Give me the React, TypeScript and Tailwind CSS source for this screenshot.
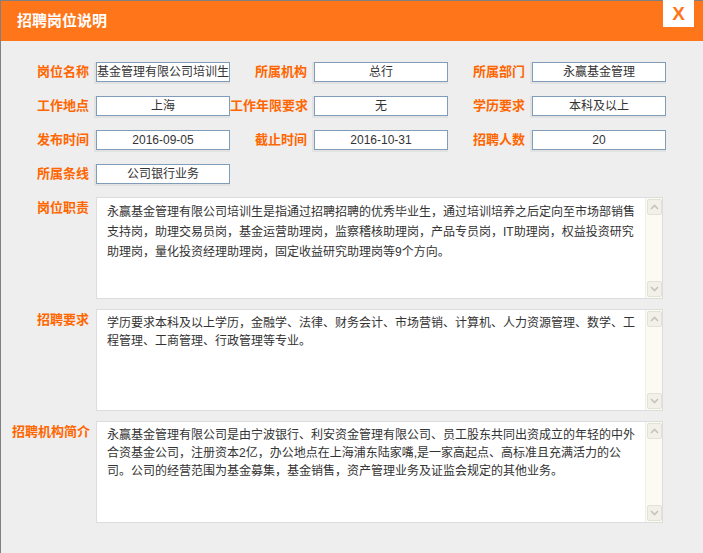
import React from "react";

const font = { fontFamily: '"Liberation Sans", "Noto Sans CJK SC", sans-serif' };

// top info fields, three per row
const rows = [
  [
    { label: "岗位名称", value: "基金管理有限公司培训生" },
    { label: "所属机构", value: "总行" },
    { label: "所属部门", value: "永赢基金管理" },
  ],
  [
    { label: "工作地点", value: "上海" },
    { label: "工作年限要求", value: "无" },
    { label: "学历要求", value: "本科及以上" },
  ],
  [
    { label: "发布时间", value: "2016-09-05" },
    { label: "截止时间", value: "2016-10-31" },
    { label: "招聘人数", value: "20" },
  ],
  [{ label: "所属条线", value: "公司银行业务" }],
];

const blocks = [
  {
    label: "岗位职责",
    leading: "leading-[20px]",
    lines: [
      "永赢基金管理有限公司培训生是指通过招聘招聘的优秀毕业生，通过培训培养之后定向至市场部销售",
      "支持岗，助理交易员岗，基金运营助理岗，监察稽核助理岗，产品专员岗，IT助理岗，权益投资研究",
      "助理岗，量化投资经理助理岗，固定收益研究助理岗等9个方向。",
    ],
  },
  {
    label: "招聘要求",
    leading: "leading-[18px]",
    lines: [
      "学历要求本科及以上学历，金融学、法律、财务会计、市场营销、计算机、人力资源管理、数学、工",
      "程管理、工商管理、行政管理等专业。",
    ],
  },
  {
    label: "招聘机构简介",
    leading: "leading-[18px]",
    lines: [
      "永赢基金管理有限公司是由宁波银行、利安资金管理有限公司、员工股东共同出资成立的年轻的中外",
      "合资基金公司，注册资本2亿，办公地点在上海浦东陆家嘴,是一家高起点、高标准且充满活力的公",
      "司。公司的经营范围为基金募集，基金销售，资产管理业务及证监会规定的其他业务。",
    ],
  },
];

function Label({ text }: { text: string }) {
  return (
    <div className="w-[77px] shrink-0 text-right whitespace-nowrap text-[13px] font-bold text-[#ff6600] leading-[20px]">
      {text}
    </div>
  );
}

function Field({ label, value }: { label: string; value: string }) {
  return (
    <div className="flex items-center">
      <Label text={label} />
      <div className="ml-[7px] w-[134px] h-[20px] border border-[#7f9db9] bg-white shadow-[-1px_1px_0_1px_#e2e2e2] overflow-hidden whitespace-nowrap text-center text-[12px] leading-[18px] text-[#333]">
        {value}
      </div>
    </div>
  );
}

function Chevron({ up }: { up?: boolean }) {
  return (
    <div className="w-[15px] h-[16px] mx-auto rounded-[2px] border border-[#e2e2d8] bg-[#f1f1e9] flex items-center justify-center">
      <svg width="9" height="6" viewBox="0 0 9 6">
        <path
          d={up ? "M1 5 L4.5 1.5 L8 5" : "M1 1 L4.5 4.5 L8 1"}
          fill="none"
          stroke="#c4c4bc"
          strokeWidth="1.6"
        />
      </svg>
    </div>
  );
}

function TextBlock({ label, lines, leading }: { label: string; lines: string[]; leading: string }) {
  return (
    <div className="flex items-start">
      <div className="pt-[1px]">
        <Label text={label} />
      </div>
      <div className="ml-[7px] w-[567px] h-[102px] border border-[#dcdcdc] bg-white flex">
        <div className={`flex-1 pl-[10px] pt-[4px] text-[12px] text-[#333] whitespace-nowrap overflow-hidden ${leading}`}>
          {lines.map((l, i) => (
            <div key={i}>{l}</div>
          ))}
        </div>
        <div className="w-[17px] bg-[#fbfbf4] border-l border-[#efefe6] flex flex-col justify-between py-[1px]">
          <Chevron up />
          <Chevron />
        </div>
      </div>
    </div>
  );
}

export default function App() {
  return (
    <div className="w-[703px] h-[553px] bg-[#eeeeee] border-l border-t border-[#808080] flex flex-col" style={font}>
      {/* header */}
      <div className="relative h-[40px] bg-[#ff751a] flex items-center pl-[16px]">
        <span className="text-white font-bold text-[15px]">招聘岗位说明</span>
        <div className="absolute right-[9px] top-[-1px] w-[31px] h-[27px] bg-white flex items-center justify-center">
          <span className="text-[#ff751a] font-bold text-[19px] leading-none">X</span>
        </div>
      </div>

      {/* form */}
      <div className="pl-[11px] pt-[21px] flex flex-col">
        <div className="flex flex-col gap-[14px]">
          {rows.map((row, i) => (
            <div key={i} className="flex">
              {row.map((f) => (
                <Field key={f.label} label={f.label} value={f.value} />
              ))}
            </div>
          ))}
        </div>
        <div className="mt-[13px] flex flex-col gap-[10px]">
          {blocks.map((b) => (
            <TextBlock key={b.label} label={b.label} lines={b.lines} leading={b.leading} />
          ))}
        </div>
      </div>
    </div>
  );
}
